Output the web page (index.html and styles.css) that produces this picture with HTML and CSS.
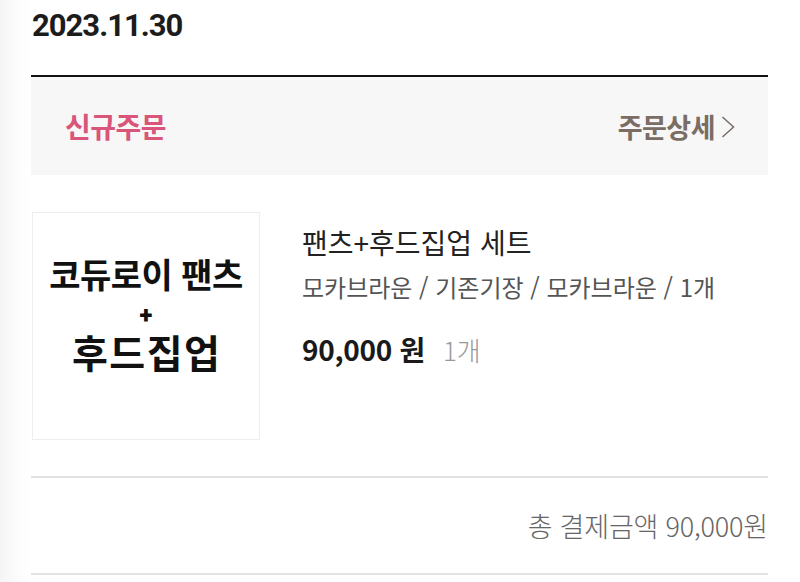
FILE: index.html
```html
<!DOCTYPE html>
<html lang="ko">
<head>
<meta charset="utf-8">
<link rel="stylesheet" href="styles.css">
</head>
<body>
<div class="page">
  <h1 class="date">2023.11.30</h1>
  <div class="status">
    <span class="status-label">신규주문</span>
    <a class="detail-link">주문상세 <svg class="chev" viewBox="0 0 14 22" width="14" height="22"><path d="M1.5 1 L12.5 11 L1.5 21" fill="none" stroke="#7a6d64" stroke-width="1.5"/></svg></a>
  </div>
  <div class="item">
    <div class="thumb">
      <div class="thumb-l1">코듀로이 팬츠</div>
      <div class="thumb-plus">+</div>
      <div class="thumb-l2">후드집업</div>
    </div>
    <div class="info">
      <div class="name">팬츠+후드집업 세트</div>
      <div class="opts">모카브라운 / 기존기장 / 모카브라운 / 1개</div>
      <div class="price"><b>90,000 원</b><span class="qty">1개</span></div>
    </div>
  </div>
  <div class="total">총 결제금액 90,000원</div>
</div>
</body>
</html>
```

FILE: styles.css
```css
html, body { margin: 0; padding: 0; }
html { background: #fff; }
body {
  font-family: Roboto, "Noto Sans CJK KR", sans-serif;
  color: #222;
  background: linear-gradient(to right, #f4f4f4 0, #fbfbfb 14px, #ffffff 30px);
  min-height: 582px;
}
.page {
  width: 737px;
  margin-left: 31px;
  background: #fff;
}
.date {
  margin: 0;
  box-sizing: border-box;
  height: 77px;
  padding: 6px 0 0 1px;
  font-size: 31px;
  line-height: 40px;
  font-weight: 700;
  letter-spacing: -1px;
  color: #1c1c1c;
  border-bottom: 2px solid #111;
}
.status {
  height: 98px;
  background: #f7f7f7;
  display: flex;
  align-items: center;
  justify-content: space-between;
  padding: 0 33px 0 34px;
}
.status-label {
  font-family: "Noto Sans CJK KR", sans-serif;
  font-size: 28px;
  font-weight: 700;
  color: #d9557a;
  letter-spacing: -0.5px;
}
.detail-link {
  font-family: "Noto Sans CJK KR", sans-serif;
  font-size: 27px;
  font-weight: 700;
  color: #7a6d64;
  letter-spacing: -0.5px;
  display: flex;
  align-items: center;
  gap: 4px;
}
.chev { margin-top: 1px; margin-left: 2px; }
.item {
  display: flex;
  gap: 42px;
  padding: 37px 0 36px 1px;
  border-bottom: 2px solid #e2e2e2;
}
.thumb {
  width: 226px;
  height: 226px;
  flex: none;
  border: 1px solid #eeeeee;
  display: flex;
  flex-direction: column;
  align-items: center;
  justify-content: center;
  font-family: "Noto Sans CJK KR", sans-serif;
  font-weight: 700;
  color: #111;
}
.thumb-l1 { font-size: 34px; line-height: 40px; letter-spacing: -0.5px; margin-top: -25px; margin-bottom: 3px; }
.thumb-plus { font-family: Roboto, sans-serif; font-weight: 900; font-size: 24px; line-height: 28px; margin: 4px 0 0; }
.thumb-l2 { font-size: 39px; line-height: 44px; letter-spacing: 1.5px; padding-left: 1.5px; }
.info {
  font-family: "Noto Sans CJK KR", sans-serif;
  padding-top: 12px;
}
.name { font-size: 28px; line-height: 36px; color: #222; letter-spacing: 0; }
.opts { font-size: 24px; line-height: 36px; color: #555; margin-top: 9px; }
.price { margin-top: 26px; line-height: 36px; display: flex; align-items: baseline; gap: 18px; }
.price b { font-family: "Noto Sans CJK KR", sans-serif; font-size: 28px; font-weight: 700; color: #1a1a1a; letter-spacing: -0.3px; }
.qty { font-size: 26px; color: #999; font-weight: 300; }
.total {
  height: 95px;
  display: flex;
  align-items: center;
  justify-content: flex-end;
  font-family: "Noto Sans CJK KR", sans-serif;
  font-size: 27px;
  font-weight: 300;
  color: #666;
  letter-spacing: -0.2px;
  border-bottom: 2px solid #e2e2e2;
}
```
